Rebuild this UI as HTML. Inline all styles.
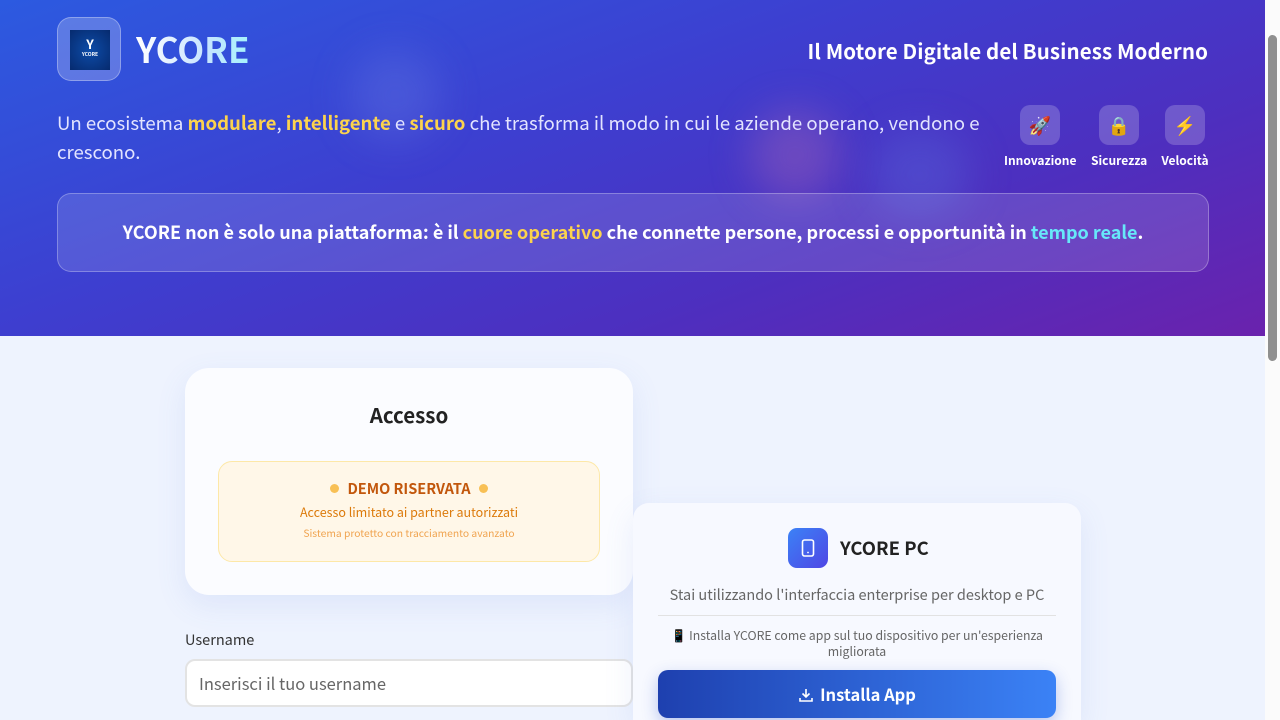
<!DOCTYPE html>
<html><head><meta charset="utf-8"><style>
*{margin:0;padding:0;box-sizing:border-box}
html{overflow:hidden;width:1280px;height:720px}
body{width:1280px;height:720px;overflow:hidden;font-family:"Noto Sans CJK SC","Liberation Sans",sans-serif;background:#eef3fe;position:relative}
.hdr{position:absolute;left:0;top:0;width:1265px;height:336px;background:linear-gradient(160deg,#2c5ae0 0%,#3d3fd0 40%,#4d2fbf 70%,#6a22ad 100%);overflow:hidden}
.blob{position:absolute;border-radius:50%;filter:blur(20px)}
.logo{position:absolute;left:57px;top:17px;width:64px;height:64px;border-radius:14px;background:rgba(255,255,255,.22);border:1px solid rgba(255,255,255,.3)}
.logo .in{position:absolute;left:12px;top:12px;width:40px;height:40px;background:radial-gradient(circle,#0d4ca8,#062a6e);color:#fff;font-size:5px;text-align:center;font-weight:700}
.title{position:absolute;left:136px;top:26px;font-size:35px;font-weight:700;line-height:46px;background:linear-gradient(90deg,#fff,#c8e4ff 60%,#a5f3fc);-webkit-background-clip:text;color:transparent}
.tag{position:absolute;right:57px;top:35px;color:#fff;font-size:20.5px;font-weight:700;letter-spacing:.1px}
.desc{position:absolute;left:57px;top:108px;width:940px;color:#e3e4ff;font-size:18.6px;line-height:29px}
.y{color:#fcd34d;font-weight:700}
.feat{position:absolute;top:105px;text-align:center;color:#fff;font-size:12px;font-weight:700}
.feat .b{width:40px;height:40px;border-radius:10px;background:rgba(255,255,255,.2);margin:0 auto 7px;display:flex;align-items:center;justify-content:center;font-size:18px}
.banner{position:absolute;left:57px;top:193px;width:1152px;height:79px;border-radius:14px;background:rgba(255,255,255,.13);border:1px solid rgba(255,255,255,.28);color:#fff;font-size:18px;font-weight:700;text-align:center;line-height:77px}
.card1{position:absolute;left:185px;top:368px;width:448px;height:227px;border-radius:24px;background:#fbfcff;box-shadow:0 10px 30px rgba(100,130,220,.12)}
.card1 h2{text-align:center;font-size:20.5px;font-weight:700;color:#222;margin-top:31px}
.demo{position:absolute;left:33px;top:93px;width:382px;height:101px;border-radius:14px;background:#fff7e8;border:1px solid #fde8a8;text-align:center}
.demo .t{margin-top:16px;color:#c2570c;font-size:14.5px;font-weight:700}
.demo .t i{display:inline-block;width:9px;height:9px;border-radius:50%;background:#f8c055;margin:0 8px;vertical-align:1px}
.demo .a{color:#dc7a0a;font-size:12.5px;margin-top:3px}
.demo .s{color:#f0a450;font-size:10.3px;margin-top:4px}
.lbl{position:absolute;left:185px;top:629px;font-size:14.5px;color:#333}
.inp{position:absolute;left:185px;top:659px;width:448px;height:48px;border-radius:10px;background:#fff;border:2px solid #e3e3e3;font-size:16.5px;color:#666;padding:10px 12px}
.card2{position:absolute;left:633px;top:503px;width:448px;height:217px;border-radius:16px 16px 0 0;background:#f7f9ff;box-shadow:0 10px 30px rgba(100,130,220,.12)}
.ic{position:absolute;left:155px;top:25px;width:40px;height:40px;border-radius:9px;background:linear-gradient(135deg,#3b82f6,#4f46e5)}
.pc{position:absolute;left:207px;top:32px;font-size:18.5px;font-weight:700;color:#222}
.st{position:absolute;left:0;width:448px;top:81px;text-align:center;color:#666;font-size:14.5px}
.hr{position:absolute;left:25px;width:398px;top:112px;height:1px;background:#e2e2e2}
.inst{position:absolute;left:25px;width:398px;top:124px;text-align:center;color:#666;font-size:12.3px;line-height:16px}
.btn{position:absolute;left:25px;top:167px;width:398px;height:48px;border-radius:10px;background:linear-gradient(90deg,#1e40af,#3b82f6);color:#fff;font-size:16.5px;font-weight:700;text-align:center;line-height:48px;box-shadow:0 6px 16px rgba(40,80,200,.3)}
.sb{position:absolute;left:1265px;top:0;width:15px;height:720px;background:#fbfbfb}
.th{position:absolute;left:1268px;top:35px;width:9px;height:326px;border-radius:5px;background:#8f8f8f}
</style></head><body>
<div class="hdr">
<div class="blob" style="left:750px;top:110px;width:90px;height:90px;background:rgba(180,110,180,.35)"></div>
<div class="blob" style="left:870px;top:130px;width:100px;height:90px;background:rgba(90,110,220,.35)"></div>
<div class="blob" style="left:350px;top:50px;width:90px;height:90px;background:rgba(120,140,230,.25)"></div>
<div class="logo"><div class="in"><div style="font-size:13px;line-height:14px;margin-top:7px">Y</div>YCORE</div></div>
<div class="title">YCORE</div>
<div class="tag">Il Motore Digitale del Business Moderno</div>
<div class="desc">Un ecosistema <span class="y">modulare</span>, <span class="y">intelligente</span> e <span class="y">sicuro</span> che trasforma il modo in cui le aziende operano, vendono e crescono.</div>
<div class="feat" style="left:1004px;width:72px"><div class="b">🚀</div>Innovazione</div>
<div class="feat" style="left:1091px;width:56px"><div class="b">🔒</div>Sicurezza</div>
<div class="feat" style="left:1161px;width:48px"><div class="b">⚡</div>Velocità</div>
<div class="banner">YCORE non è solo una piattaforma: è il <span style="color:#fcd34d">cuore operativo</span> che connette persone, processi e opportunità in <span style="color:#67e8f9">tempo reale</span>.</div>
</div>
<div class="card1"><h2>Accesso</h2>
<div class="demo"><div class="t"><i></i>DEMO RISERVATA<i></i></div><div class="a">Accesso limitato ai partner autorizzati</div><div class="s">Sistema protetto con tracciamento avanzato</div></div>
</div>
<div class="lbl">Username</div>
<div class="inp">Inserisci il tuo username</div>
<div class="card2">
<div class="ic"><svg width="40" height="40" viewBox="0 0 40 40"><rect x="14.5" y="12" width="11" height="16" rx="2" fill="none" stroke="#fff" stroke-width="1.6"/><circle cx="20" cy="24.5" r=".9" fill="#fff"/></svg></div>
<div class="pc">YCORE PC</div>
<div class="st">Stai utilizzando l'interfaccia enterprise per desktop e PC</div>
<div class="hr"></div>
<div class="inst">📱 Installa YCORE come app sul tuo dispositivo per un'esperienza migliorata</div>
<div class="btn"><svg width="16" height="16" viewBox="0 0 16 16" style="vertical-align:-2px;margin-right:6px"><path d="M8 2v8M4.5 6.5L8 10l3.5-3.5M2 11v3h12v-3" fill="none" stroke="#fff" stroke-width="1.6"/></svg>Installa App</div>
</div>
<div class="sb"></div><div class="th"></div>
</body></html>
